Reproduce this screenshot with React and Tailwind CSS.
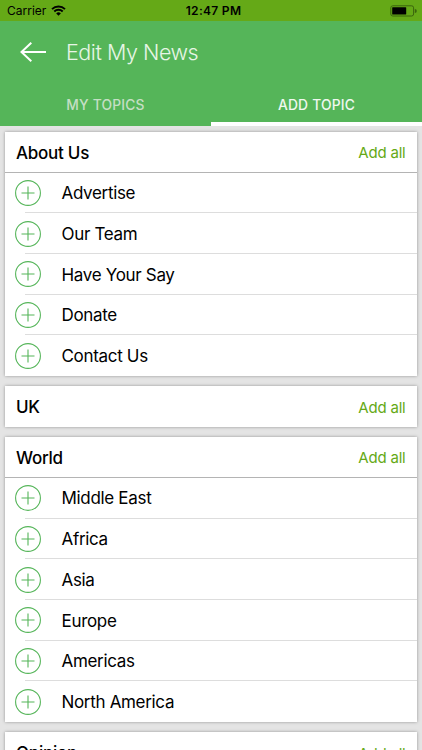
import { useState } from "react";

const sections = [
  {
    title: "About Us",
    topics: ["Advertise", "Our Team", "Have Your Say", "Donate", "Contact Us"],
  },
  { title: "UK", topics: [] },
  {
    title: "World",
    topics: [
      "Middle East",
      "Africa",
      "Asia",
      "Europe",
      "Americas",
      "North America",
    ],
  },
  { title: "Opinion", topics: [] },
];

const StatusBar = () => (
  <div className="grid h-[21px] shrink-0 grid-cols-3 items-center bg-[#65a917] px-[7px] text-black">
    <div className="flex items-center gap-[5px]">
      <span className="text-[12px] leading-[15px]">Carrier</span>
      <svg width="15" height="11" viewBox="0 0 15 11" fill="none">
        <path
          d="M1 4.1a9.3 9.3 0 0 1 13 0M3.3 6.5a6 6 0 0 1 8.4 0"
          stroke="#000"
          strokeWidth="1.9"
        />
        <path d="M7.5 10.8 5.2 8.4a3.3 3.3 0 0 1 4.6 0z" fill="#000" />
      </svg>
    </div>
    <span className="pl-[5px] text-center text-[12px] leading-[15px] font-semibold tracking-[0.3px]">
      12:47 PM
    </span>
    <svg
      className="-mr-[2px] justify-self-end"
      width="27"
      height="12"
      viewBox="0 0 27 12"
    >
      <rect
        x="0.8"
        y="0.8"
        width="22.8"
        height="10.2"
        rx="2"
        fill="none"
        stroke="#3b640d"
        strokeWidth="1"
      />
      <rect x="2.2" y="2.2" width="14" height="7.4" rx="0.5" fill="#000" />
      <path d="M24.8 4v4a2 2 0 0 0 0-4z" fill="#3b640d" />
    </svg>
  </div>
);

const Tab = ({ label, active, onClick }) => (
  <button
    type="button"
    onClick={onClick}
    className={`flex-1 border-b-4 pt-[6px] text-[13.8px] font-medium tracking-[0.2px] ${
      active ? "border-white text-[#f0f8ef]" : "border-transparent text-[#c5dfc4]"
    }`}
  >
    {label}
  </button>
);

const TopicRow = ({ name }) => (
  <li className="flex h-[40.7px] items-center pl-[10px]">
    <svg className="shrink-0" width="26" height="26" viewBox="0 0 26 26" fill="none">
      <circle cx="13" cy="13" r="12.4" stroke="#55b559" strokeWidth="1.1" />
      <path d="M13 6.5v13M6.5 13h13" stroke="#55b559" strokeWidth="1.1" />
    </svg>
    <span className="ml-[20.5px] pt-[2px] text-[17px] tracking-[-0.32px]">
      {name}
    </span>
  </li>
);

const Section = ({ title, topics }) => (
  <section className="bg-white shadow-[0_0_3px_rgba(0,0,0,0.35)]">
    <div
      className={`flex h-[40.7px] items-center justify-between px-[11px] pt-[3px] ${
        topics.length > 0 ? "border-b border-[#b4b4b4]" : ""
      }`}
    >
      <h2 className="text-[17px] font-medium tracking-[-0.25px]">{title}</h2>
      <button type="button" className="text-[15px] tracking-[-0.2px] text-[#65a917]">
        Add all
      </button>
    </div>
    {topics.length > 0 && (
      <ul>
        {topics.map((topic, i) => (
          <div key={topic}>
            {i > 0 && <div className="-mt-px ml-[20px] h-px bg-[#dddddd]" />}
            <TopicRow name={topic} />
          </div>
        ))}
      </ul>
    )}
  </section>
);

const App = () => {
  const [tab, setTab] = useState("add");

  return (
    <div className="flex h-[750px] w-[422px] flex-col overflow-hidden bg-[#e4e4e4] font-['Inter','Liberation_Sans',sans-serif] text-black">
      <StatusBar />
      <header className="flex h-[105px] shrink-0 flex-col bg-[#55b559]">
        <div className="flex h-[61px] items-center pl-[20px]">
          <svg width="27" height="20" viewBox="0 0 27 20" fill="none">
            <path
              d="M26 10H1.5M11.3.8 1.5 10l9.8 9.2"
              stroke="#fff"
              strokeWidth="2"
            />
          </svg>
          <h1 className="ml-[19px] pt-px text-[21.5px] font-light tracking-[-0.45px] text-[#e7f5e6]">
            Edit My News
          </h1>
        </div>
        <nav className="flex flex-1">
          <Tab
            label="MY TOPICS"
            active={tab === "my"}
            onClick={() => setTab("my")}
          />
          <Tab
            label="ADD TOPIC"
            active={tab === "add"}
            onClick={() => setTab("add")}
          />
        </nav>
      </header>
      <main className="flex flex-col gap-[10.2px] pt-[6px] pr-[5.5px] pl-[5px]">
        {sections.map((section) => (
          <Section key={section.title} {...section} />
        ))}
      </main>
    </div>
  );
};

export default App;
